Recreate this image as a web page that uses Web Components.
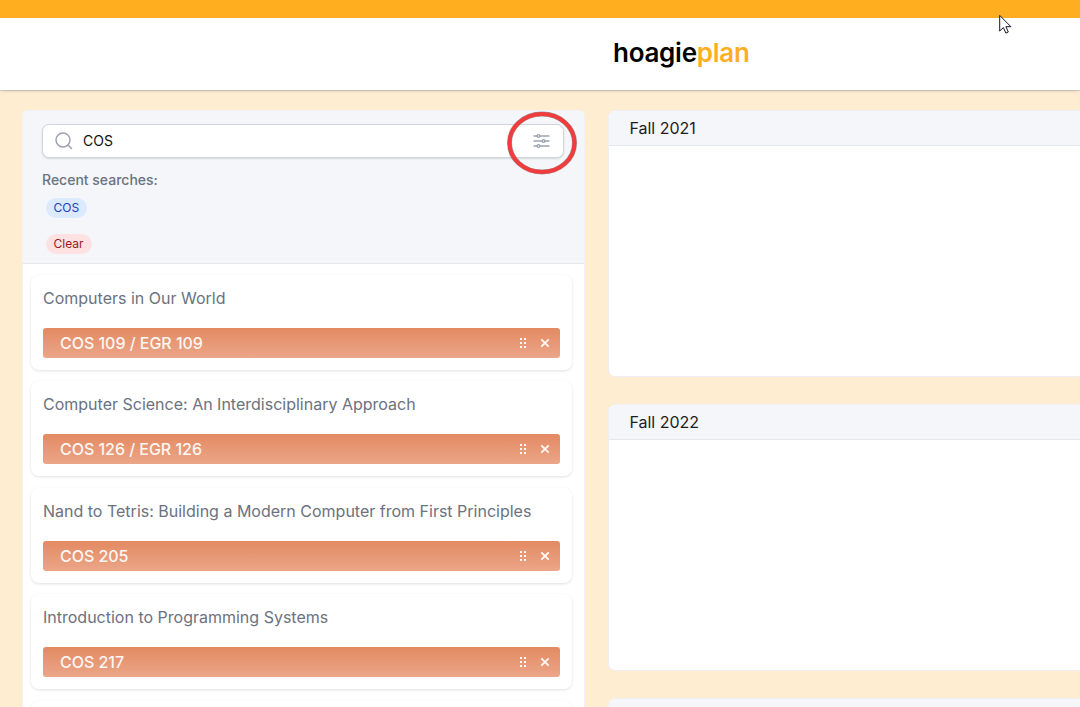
<!DOCTYPE html>
<html lang="en">
<head>
<meta charset="utf-8">
<title>hoagieplan</title>
<style>
html,body{margin:0;height:100%;overflow:hidden}
body{font-family:Inter,"Liberation Sans",sans-serif;background:#ffedd1}
</style>
</head>
<body>
<plan-app></plan-app>
<script>
const define = (name, html, setup) => customElements.define(name, class extends HTMLElement {
  connectedCallback() {
    if (this.shadowRoot) return;
    this.attachShadow({mode: 'open'}).innerHTML = '<style>*{box-sizing:border-box}</style>' + html;
    if (setup) setup(this, this.shadowRoot);
  }
});

define('site-header', `
<style>
:host{display:block;position:relative;flex:none}
.strip{height:18px;background:#ffae1f}
.bar{height:72px;background:#fff;display:flex;align-items:center;padding-left:613px;box-shadow:0 1px 1px rgba(67,90,111,.18),0 2px 4px -2px rgba(67,90,111,.3)}
.logo{font-size:26px;font-weight:600;line-height:32px;letter-spacing:-.27px;color:#000;white-space:nowrap;margin-top:-2px}
b{font-weight:600;color:#ffae1f}
</style>
<div class="strip"></div><div class="bar"><div class="logo">hoagie<b>plan</b></div></div>`);

define('mouse-pointer', `
<style>:host{position:absolute;left:999px;top:14px;width:14px;height:22px}svg{display:block}</style>
<svg width="14" height="22" viewBox="0 0 14 22"><path d="M.7 1.4V17l3.7-3.4 2.5 5.5 2.4-1.1-2.4-5.3h5z" fill="#fff" stroke="#15152a" stroke-width="1"/></svg>`);

define('search-box', `
<style>
:host{display:flex;align-items:center;height:34px;padding:0 13px 0 11px;background:#fff;border:1px solid #d1d5db;border-radius:7px;box-shadow:0 1px 2px rgba(0,0,0,.12);position:relative}
.q{flex:1;margin-left:9px;font-size:14px;line-height:20px;color:#111}
svg{display:block;fill:none;stroke:#9ca3af}
.ring{position:absolute;left:463px;top:-14px;overflow:visible}
</style>
<svg width="20" height="20" viewBox="0 0 20 20" stroke-width="1.5" stroke-linecap="round"><circle cx="9" cy="9" r="7"/><path d="M14 14l3.5 3.5"/></svg>
<span class="q"><slot></slot></span>
<svg width="17" height="16" viewBox="0 0 17 16" stroke-width="1.4" stroke-linecap="round"><path d="M1 3h3M7 3h9M1 8h8M12 8h4M1 13h3M7 13h9"/><circle cx="5.5" cy="3" r="1.4"/><circle cx="10.5" cy="8" r="1.4"/><circle cx="5.5" cy="13" r="1.4"/></svg>
<svg class="ring" width="70" height="64" viewBox="0 0 70 64"><ellipse cx="36" cy="32" rx="32.5" ry="29" stroke="#777" stroke-opacity=".7" stroke-width="5"/><ellipse cx="36" cy="32" rx="32.5" ry="29" stroke="#f03c3c" stroke-width="4"/></svg>`);

define('search-tag', `
<style>
:host{display:block;width:max-content;height:20px;line-height:20px;padding:0 8px 0 7.5px;border-radius:10px;font-size:12px;background:#dbeafe;color:#1e40af}
:host([tone=danger]){background:#fee2e2;color:#991b1b}
</style><slot></slot>`);

define('course-card', `
<style>
:host{display:block;flex:none;height:95px;padding:11px 12px 12px;border-radius:8px;background:#fff;box-shadow:0 1px 3px rgba(0,0,0,.12)}
.title{height:24px;line-height:24px;font-size:16px;color:#6b7280;white-space:nowrap}
.course{margin-top:18px;height:30px;display:flex;align-items:center;padding:0 9px 0 17px;border-radius:3px;background:linear-gradient(#e38a62,#eba688);color:#fff;font-size:16px;font-weight:500;letter-spacing:-.03px}
.code{flex:1;opacity:.92}
svg{display:block;flex:none}
.x{margin-left:12px}
</style>
<div class="title"><slot></slot></div>
<div class="course"><span class="code"></span>
<svg width="8" height="12" viewBox="0 0 8 12" fill="#fff" fill-opacity=".9"><path d="M1 1h2v2H1zM5 1h2v2H5zM1 5h2v2H1zM5 5h2v2H5zM1 9h2v2H1zM5 9h2v2H5z"/></svg>
<svg class="x" width="12" height="12" viewBox="0 0 12 12" fill="none" stroke="#fff" stroke-width="1.8" stroke-opacity=".95"><path d="M2.3 2.3l7.4 7.4M9.7 2.3L2.3 9.7"/></svg></div>`,
(el, root) => root.querySelector('.code').textContent = el.getAttribute('code') || '');

define('search-panel', `
<style>
:host{display:flex;flex:none;flex-direction:column;width:563px;background:#fff;border:1px solid #f0f2f6;border-bottom:0;border-radius:6px 6px 0 0;overflow:hidden}
.head{flex:none;height:153px;padding:13px 20px 0 19px;background:#f4f6fa;border-bottom:1px solid #e3e6ec}
.recent{margin:12px 0 8px;font-size:14px;font-weight:500;line-height:20px;color:#6b7280}
search-tag{margin:0 0 16px 4px}
.list{display:flex;flex-direction:column;gap:11.4px;padding:11px 12px 0 8px}
</style>
<div class="head"><search-box>COS</search-box><div class="recent">Recent searches:</div><search-tag>COS</search-tag><search-tag tone="danger">Clear</search-tag></div>
<div class="list"><slot></slot></div>`);

define('semester-bin', `
<style>
:host{display:block;flex:none;height:267px;background:#fff;border:1px solid #edeff5;border-radius:7px;overflow:hidden}
.name{height:35px;padding-left:20.4px;line-height:35px;font-size:16px;color:#1c1e21;background:#f4f6fa;border-bottom:1px solid #e3e6ec}
</style><div class="name"><slot></slot></div>`);

define('plan-app', `
<style>
:host{display:flex;flex-direction:column;height:707px;overflow:hidden;position:relative}
main{flex:1;min-height:0;display:flex;gap:23px;padding:20px 0 0 22px}
.bins{flex:none;width:500px;display:flex;flex-direction:column;gap:27px}
</style>
<site-header></site-header>
<main>
<search-panel>
<course-card code="COS 109 / EGR 109">Computers in Our World</course-card>
<course-card code="COS 126 / EGR 126">Computer Science: An Interdisciplinary Approach</course-card>
<course-card code="COS 205">Nand to Tetris: Building a Modern Computer from First Principles</course-card>
<course-card code="COS 217">Introduction to Programming Systems</course-card>
<course-card></course-card>
</search-panel>
<div class="bins"><semester-bin>Fall 2021</semester-bin><semester-bin>Fall 2022</semester-bin><semester-bin></semester-bin></div>
</main>
<mouse-pointer></mouse-pointer>`);
</script>
</body>
</html>
